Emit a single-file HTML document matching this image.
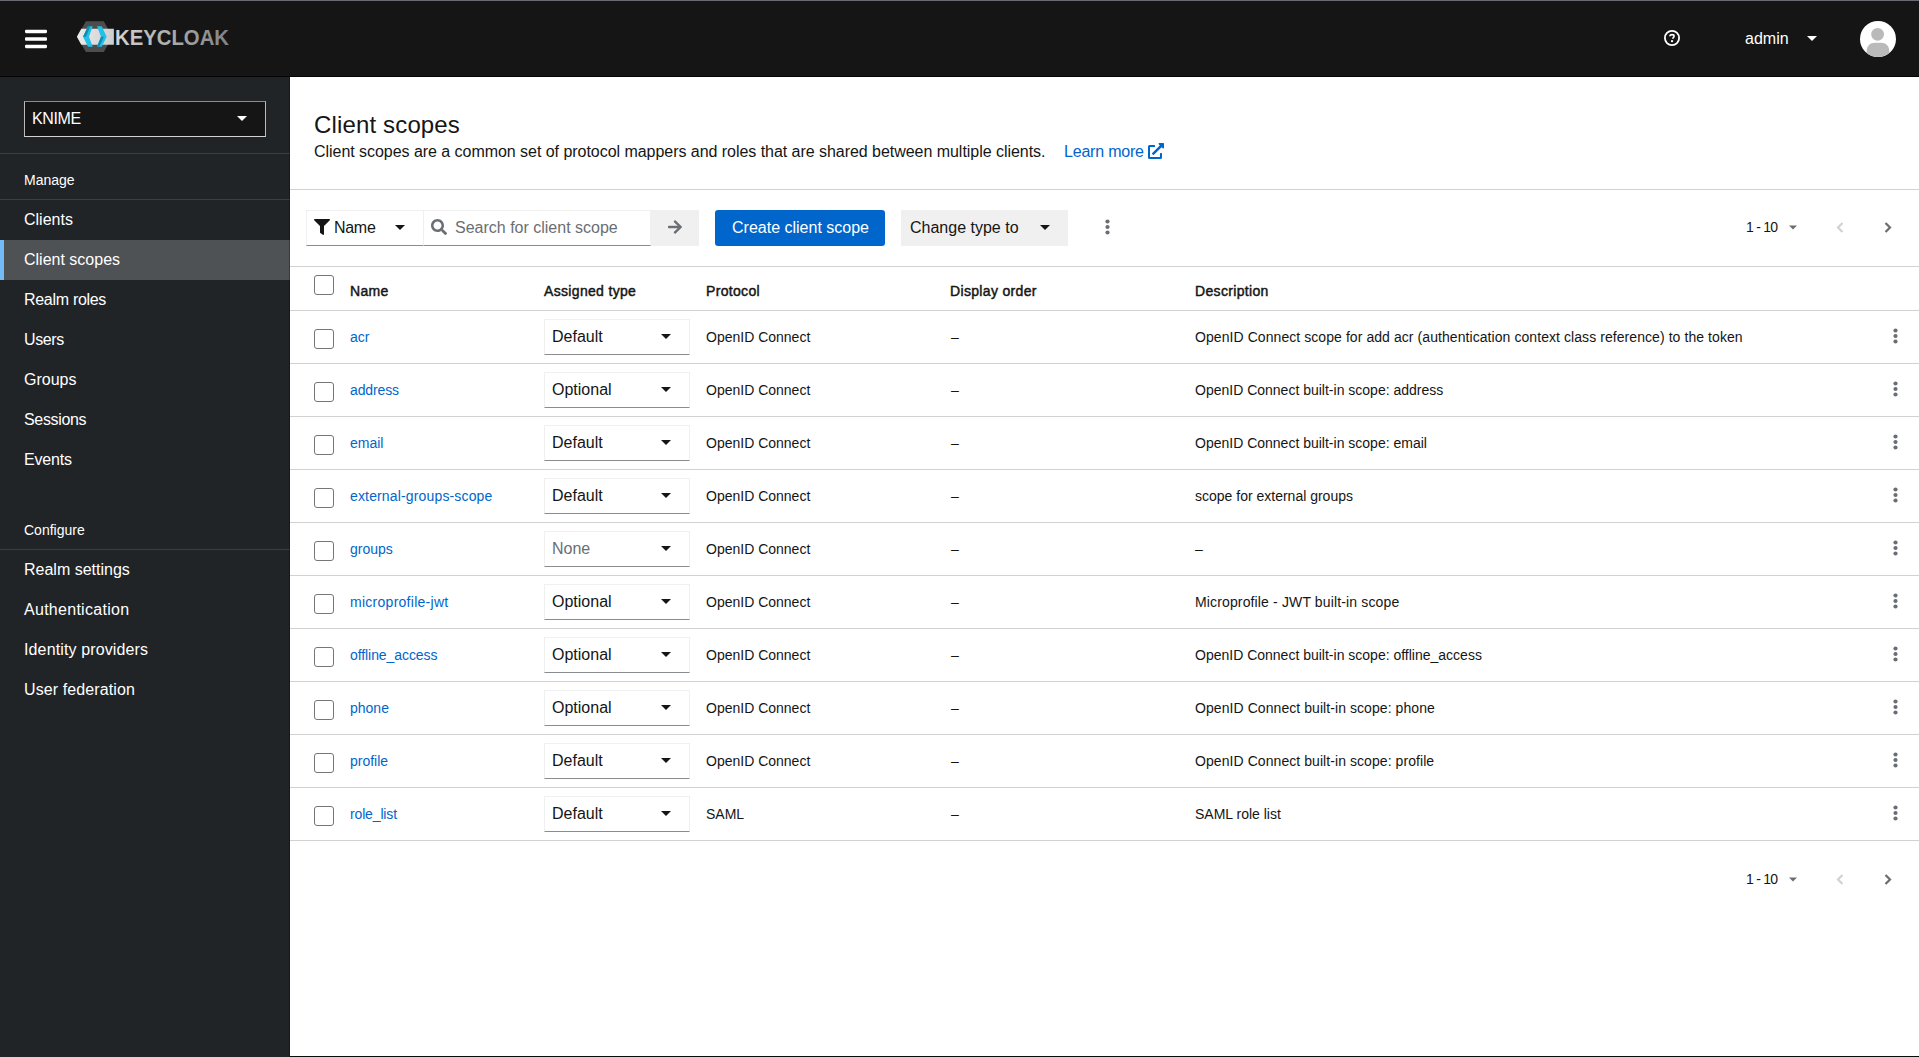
<!DOCTYPE html>
<html><head><meta charset="utf-8">
<style>
*{box-sizing:border-box;margin:0;padding:0}
html,body{width:1919px;height:1057px;overflow:hidden;background:#fff;font-family:"Liberation Sans",sans-serif;color:#151515}
.abs{position:absolute}
.t{position:absolute;white-space:nowrap;line-height:1}
svg{display:block}
</style></head><body>
<div class="abs" style="left:0px;top:0px;width:1919px;height:77px;background:#151515;"></div>
<div class="abs" style="left:0px;top:0px;width:1919px;height:1px;background:#6a6b70;"></div>
<div class="abs" style="left:0px;top:76px;width:1919px;height:1px;background:#030303;"></div>
<svg class="abs" style="left:25px;top:29px" width="22" height="20" viewBox="0 0 22 20"><rect x="0" y="0.7" width="22" height="3.5" rx="1.1" fill="#fff"/><rect x="0" y="8.2" width="22" height="3.6" rx="1.1" fill="#fff"/><rect x="0" y="15.7" width="22" height="3.5" rx="1.1" fill="#fff"/></svg>
<svg class="abs" style="left:70px;top:15px" width="170" height="45" viewBox="70 15 170 45">
<defs>
<linearGradient id="kg" x1="115" y1="0" x2="229" y2="0" gradientUnits="userSpaceOnUse">
<stop offset="0" stop-color="#d4d4d4"/><stop offset="1" stop-color="#828282"/></linearGradient>
<linearGradient id="bg1" x1="77" y1="0" x2="114" y2="0" gradientUnits="userSpaceOnUse">
<stop offset="0" stop-color="#ececec"/><stop offset="1" stop-color="#cdcdcd"/></linearGradient>
</defs>
<path d="M85.9 21.2H103.8L112.5 36.7L103.8 52H85.9L76.9 36.7Z" fill="#4d4d4d"/>
<path d="M81.3 28.8H113.9V44.8H81.3L76.9 36.7Z" fill="url(#bg1)"/>
<path d="M88 26.3H92.7L89 36.7L92.7 46.8H88L83 36.7Z" fill="#22c1ea"/>
<path d="M97 26.3H101.7L106.7 36.7L101.7 46.8H97L101 36.7Z" fill="#22c1ea"/>
<path d="M88 26.3H90.35L86 36.7H83Z" fill="#0b8db5"/>
<path d="M101 36.7H103.85L99.35 46.8H97Z" fill="#0b8db5"/>
<text x="115" y="45" font-family="Liberation Sans" font-weight="700" font-size="22.6" textLength="114" lengthAdjust="spacingAndGlyphs" fill="url(#kg)">KEYCLOAK</text>
</svg>
<svg class="abs" style="left:1664px;top:30px" width="16" height="16" viewBox="0 0 16 16"><circle cx="8" cy="8" r="7.1" fill="none" stroke="#fff" stroke-width="1.8"/><path d="M5.9 6.3C5.9 5.1 6.9 4.6 8 4.6C9.1 4.6 10.1 5.2 10.1 6.2C10.1 7.3 8.8 7.5 8.8 8.7" fill="none" stroke="#fff" stroke-width="1.6"/><rect x="7" y="10.2" width="2.1" height="1.9" fill="#fff"/></svg>
<div class="t" style="left:1745px;top:31px;font-size:16px;color:#fff;font-weight:400;">admin</div>
<svg class="abs" style="left:1807px;top:36px" width="10" height="5" viewBox="0 0 10 5"><path d="M0 0H10L5 5Z" fill="#fff"/></svg>
<svg class="abs" style="left:1860px;top:21px" width="36" height="36" viewBox="0 0 36 36"><defs><clipPath id="ac"><circle cx="18" cy="18" r="18"/></clipPath></defs><circle cx="18" cy="18" r="18" fill="#fff"/><g clip-path="url(#ac)" fill="#bababa"><circle cx="17.6" cy="13.3" r="6.4"/><path d="M6.7 36V30C6.7 25 10 21.8 15 21.8H21C26 21.8 29.2 25 29.2 30V36Z"/></g></svg>
<div class="abs" style="left:0px;top:77px;width:290px;height:980px;background:#212427;"></div>
<div class="abs" style="left:24px;top:101px;width:242px;height:36px;background:#151515;border:1px solid #b8bbbe;border-top-color:#8a8d90;border-bottom-color:#d2d2d2"></div>
<div class="t" style="left:32px;top:111px;font-size:16px;color:#fff;font-weight:400;letter-spacing:-0.4px">KNIME</div>
<svg class="abs" style="left:237px;top:116px" width="10" height="5" viewBox="0 0 10 5"><path d="M0 0H10L5 5Z" fill="#fff"/></svg>
<div class="abs" style="left:0px;top:153px;width:290px;height:1px;background:#3c3f42;"></div>
<div class="t" style="left:24px;top:173px;font-size:14px;color:#fff;font-weight:400;">Manage</div>
<div class="abs" style="left:0px;top:199px;width:290px;height:1px;background:#3c3f42;"></div>
<div class="t" style="left:24px;top:212px;font-size:16px;color:#fff;font-weight:400;letter-spacing:0px">Clients</div>
<div class="abs" style="left:0px;top:240px;width:290px;height:40px;background:#4f5255;"></div>
<div class="abs" style="left:0px;top:240px;width:4px;height:40px;background:#73bcf7;"></div>
<div class="t" style="left:24px;top:252px;font-size:16px;color:#fff;font-weight:400;letter-spacing:0px">Client scopes</div>
<div class="t" style="left:24px;top:292px;font-size:16px;color:#fff;font-weight:400;letter-spacing:-0.3px">Realm roles</div>
<div class="t" style="left:24px;top:332px;font-size:16px;color:#fff;font-weight:400;letter-spacing:-0.4px">Users</div>
<div class="t" style="left:24px;top:372px;font-size:16px;color:#fff;font-weight:400;letter-spacing:0px">Groups</div>
<div class="t" style="left:24px;top:412px;font-size:16px;color:#fff;font-weight:400;letter-spacing:-0.33px">Sessions</div>
<div class="t" style="left:24px;top:452px;font-size:16px;color:#fff;font-weight:400;letter-spacing:-0.2px">Events</div>
<div class="t" style="left:24px;top:523px;font-size:14px;color:#fff;font-weight:400;">Configure</div>
<div class="abs" style="left:0px;top:549px;width:290px;height:1px;background:#3c3f42;"></div>
<div class="t" style="left:24px;top:562px;font-size:16px;color:#fff;font-weight:400;letter-spacing:0px">Realm settings</div>
<div class="t" style="left:24px;top:602px;font-size:16px;color:#fff;font-weight:400;letter-spacing:0.28px">Authentication</div>
<div class="t" style="left:24px;top:642px;font-size:16px;color:#fff;font-weight:400;letter-spacing:0.13px">Identity providers</div>
<div class="t" style="left:24px;top:682px;font-size:16px;color:#fff;font-weight:400;letter-spacing:0.1px">User federation</div>
<div class="abs" style="left:289px;top:77px;width:1px;height:980px;background:rgba(0,0,0,0.3);"></div>
<div class="t" style="left:314px;top:113px;font-size:24px;color:#151515;font-weight:400;letter-spacing:0.15px">Client scopes</div>
<div class="t" style="left:314px;top:144px;font-size:16px;color:#151515;font-weight:400;letter-spacing:-0.04px">Client scopes are a common set of protocol mappers and roles that are shared between multiple clients.</div>
<div class="t" style="left:1064px;top:144px;font-size:16px;color:#0066cc;font-weight:400;letter-spacing:-0.2px">Learn more</div>
<svg class="abs" style="left:1148px;top:143px" width="16" height="16" viewBox="0 0 512 512"><path fill="#0066cc" d="M432 320h-32a16 16 0 0 0-16 16v112H64V128h144a16 16 0 0 0 16-16V80a16 16 0 0 0-16-16H48A48 48 0 0 0 0 112v352a48 48 0 0 0 48 48h352a48 48 0 0 0 48-48V336a16 16 0 0 0-16-16zM488 0H360c-21.37 0-32.05 25.91-17 41l35.73 35.73L135 320.37a24 24 0 0 0 0 34L157.67 377a24 24 0 0 0 34 0L435.28 133.32 471 169c15 15 41 4.5 41-17V24a24 24 0 0 0-24-24z"/></svg>
<div class="abs" style="left:290px;top:189px;width:1629px;height:1px;background:#d2d2d2;"></div>
<div class="abs" style="left:306px;top:210px;width:117px;height:36px;border:1px solid #f0f0f0;border-bottom-color:#8a8d90;border-right:none"></div>
<svg class="abs" style="left:314px;top:219px" width="16" height="16" viewBox="0 0 512 512"><path fill="#151515" d="M487.976 0H24.028C2.71 0-8.047 25.866 7.058 40.971L192 225.941V432c0 7.831 3.821 15.17 10.237 19.662l80 55.98C298.02 518.69 320 507.493 320 487.98V225.941l184.947-184.97C520.021 25.896 509.338 0 487.976 0z"/></svg>
<div class="t" style="left:334px;top:220px;font-size:16px;color:#151515;font-weight:400;letter-spacing:-0.3px">Name</div>
<svg class="abs" style="left:395px;top:225px" width="10" height="5" viewBox="0 0 10 5"><path d="M0 0H10L5 5Z" fill="#151515"/></svg>
<div class="abs" style="left:423px;top:210px;width:228px;height:36px;border:1px solid #f0f0f0;border-bottom-color:#8a8d90"></div>
<svg class="abs" style="left:431px;top:219px" width="16" height="16" viewBox="0 0 512 512"><path fill="#6a6e73" d="M505 442.7L405.3 343c-4.5-4.5-10.6-7-17-7H372c27.6-35.3 44-79.7 44-128C416 93.1 322.9 0 208 0S0 93.1 0 208s93.1 208 208 208c48.3 0 92.7-16.4 128-44v16.3c0 6.4 2.5 12.5 7 17l99.7 99.7c9.4 9.4 24.6 9.4 33.9 0l28.3-28.3c9.4-9.4 9.4-24.6.1-34zM208 336c-70.7 0-128-57.2-128-128 0-70.7 57.2-128 128-128 70.7 0 128 57.2 128 128 0 70.7-57.2 128-128 128z"/></svg>
<div class="t" style="left:455px;top:220px;font-size:16px;color:#6a6e73;font-weight:400;">Search for client scope</div>
<div class="abs" style="left:651px;top:210px;width:48px;height:36px;background:#f0f0f0;"></div>
<svg class="abs" style="left:667px;top:219px" width="16" height="16" viewBox="0 0 448 512"><path fill="#6a6e73" d="M190.5 66.9l22.2-22.2c9.4-9.4 24.6-9.4 33.9 0L441 239c9.4 9.4 9.4 24.6 0 33.9L246.6 467.3c-9.4 9.4-24.6 9.4-33.9 0l-22.2-22.2c-9.5-9.5-9.3-25 .4-34.3L311.4 296H24c-13.3 0-24-10.7-24-24v-32c0-13.3 10.7-24 24-24h287.4L190.9 101.2c-9.8-9.3-10-24.8-.4-34.3z"/></svg>
<div class="abs" style="left:715px;top:210px;width:170px;height:36px;background:#0066cc;border-radius:3px;"></div>
<div class="t" style="left:732px;top:220px;font-size:16px;color:#fff;font-weight:400;">Create client scope</div>
<div class="abs" style="left:901px;top:210px;width:167px;height:36px;background:#f0f0f0;"></div>
<div class="t" style="left:910px;top:220px;font-size:16px;color:#151515;font-weight:400;">Change type to</div>
<svg class="abs" style="left:1040px;top:225px" width="10" height="5" viewBox="0 0 10 5"><path d="M0 0H10L5 5Z" fill="#151515"/></svg>
<svg class="abs" style="left:1105.1px;top:219px" width="5" height="16" viewBox="0 0 5 16"><circle cx="2.5" cy="2.5" r="2.1" fill="#6a6e73"/><circle cx="2.5" cy="8" r="2.1" fill="#6a6e73"/><circle cx="2.5" cy="13.5" r="2.1" fill="#6a6e73"/></svg>
<div class="t" style="left:1746px;top:220px;font-size:14px;color:#151515;font-weight:400;letter-spacing:-0.75px">1 - 10</div>
<svg class="abs" style="left:1789px;top:225px" width="8" height="5" viewBox="0 0 10 5"><path d="M0 0H10L5 5Z" fill="#6a6e73"/></svg>
<svg class="abs" style="left:1836px;top:221.5px" width="8" height="11" viewBox="0 0 8 11"><path d="M6.5 1L2 5.5L6.5 10" fill="none" stroke="#d2d2d2" stroke-width="2.2"/></svg>
<svg class="abs" style="left:1884px;top:221.5px" width="8" height="11" viewBox="0 0 8 11"><path d="M1.5 1L6 5.5L1.5 10" fill="none" stroke="#6a6e73" stroke-width="2.2"/></svg>
<div class="abs" style="left:290px;top:266px;width:1629px;height:1px;background:#d2d2d2;"></div>
<div class="abs" style="left:314px;top:275px;width:20px;height:20px;border:1px solid #767676;border-radius:3px;background:#fff"></div>
<div class="t" style="left:350px;top:284px;font-size:14px;color:#151515;font-weight:400;letter-spacing:0.33px;-webkit-text-stroke:0.45px #151515">Name</div>
<div class="t" style="left:544px;top:284px;font-size:14px;color:#151515;font-weight:400;letter-spacing:0.33px;-webkit-text-stroke:0.45px #151515">Assigned type</div>
<div class="t" style="left:706px;top:284px;font-size:14px;color:#151515;font-weight:400;letter-spacing:0.33px;-webkit-text-stroke:0.45px #151515">Protocol</div>
<div class="t" style="left:950px;top:284px;font-size:14px;color:#151515;font-weight:400;letter-spacing:0.33px;-webkit-text-stroke:0.45px #151515">Display order</div>
<div class="t" style="left:1195px;top:284px;font-size:14px;color:#151515;font-weight:400;letter-spacing:0.33px;-webkit-text-stroke:0.45px #151515">Description</div>
<div class="abs" style="left:290px;top:310px;width:1629px;height:1px;background:#d2d2d2;"></div>
<div class="abs" style="left:314px;top:329px;width:20px;height:20px;border:1px solid #767676;border-radius:3px;background:#fff"></div>
<div class="t" style="left:350px;top:330px;font-size:14px;color:#0066cc;font-weight:400;letter-spacing:0.00px">acr</div>
<div class="abs" style="left:544px;top:319px;width:146px;height:36px;border:1px solid #f0f0f0;border-bottom-color:#8a8d90"></div>
<div class="t" style="left:552px;top:329px;font-size:16px;color:#151515;font-weight:400;">Default</div>
<svg class="abs" style="left:661px;top:334px" width="10" height="5" viewBox="0 0 10 5"><path d="M0 0H10L5 5Z" fill="#151515"/></svg>
<div class="t" style="left:706px;top:330px;font-size:14px;color:#151515;font-weight:400;">OpenID Connect</div>
<div class="t" style="left:951px;top:330px;font-size:14px;color:#151515;font-weight:400;">&ndash;</div>
<div class="t" style="left:1195px;top:330px;font-size:14px;color:#151515;font-weight:400;letter-spacing:0.07px">OpenID Connect scope for add acr (authentication context class reference) to the token</div>
<svg class="abs" style="left:1893.0px;top:328px" width="5" height="16" viewBox="0 0 5 16"><circle cx="2.5" cy="2.5" r="2.1" fill="#6a6e73"/><circle cx="2.5" cy="8" r="2.1" fill="#6a6e73"/><circle cx="2.5" cy="13.5" r="2.1" fill="#6a6e73"/></svg>
<div class="abs" style="left:290px;top:363px;width:1629px;height:1px;background:#d2d2d2;"></div>
<div class="abs" style="left:314px;top:382px;width:20px;height:20px;border:1px solid #767676;border-radius:3px;background:#fff"></div>
<div class="t" style="left:350px;top:383px;font-size:14px;color:#0066cc;font-weight:400;letter-spacing:-0.12px">address</div>
<div class="abs" style="left:544px;top:372px;width:146px;height:36px;border:1px solid #f0f0f0;border-bottom-color:#8a8d90"></div>
<div class="t" style="left:552px;top:382px;font-size:16px;color:#151515;font-weight:400;">Optional</div>
<svg class="abs" style="left:661px;top:387px" width="10" height="5" viewBox="0 0 10 5"><path d="M0 0H10L5 5Z" fill="#151515"/></svg>
<div class="t" style="left:706px;top:383px;font-size:14px;color:#151515;font-weight:400;">OpenID Connect</div>
<div class="t" style="left:951px;top:383px;font-size:14px;color:#151515;font-weight:400;">&ndash;</div>
<div class="t" style="left:1195px;top:383px;font-size:14px;color:#151515;font-weight:400;letter-spacing:0.00px">OpenID Connect built-in scope: address</div>
<svg class="abs" style="left:1893.0px;top:381px" width="5" height="16" viewBox="0 0 5 16"><circle cx="2.5" cy="2.5" r="2.1" fill="#6a6e73"/><circle cx="2.5" cy="8" r="2.1" fill="#6a6e73"/><circle cx="2.5" cy="13.5" r="2.1" fill="#6a6e73"/></svg>
<div class="abs" style="left:290px;top:416px;width:1629px;height:1px;background:#d2d2d2;"></div>
<div class="abs" style="left:314px;top:435px;width:20px;height:20px;border:1px solid #767676;border-radius:3px;background:#fff"></div>
<div class="t" style="left:350px;top:436px;font-size:14px;color:#0066cc;font-weight:400;letter-spacing:0.00px">email</div>
<div class="abs" style="left:544px;top:425px;width:146px;height:36px;border:1px solid #f0f0f0;border-bottom-color:#8a8d90"></div>
<div class="t" style="left:552px;top:435px;font-size:16px;color:#151515;font-weight:400;">Default</div>
<svg class="abs" style="left:661px;top:440px" width="10" height="5" viewBox="0 0 10 5"><path d="M0 0H10L5 5Z" fill="#151515"/></svg>
<div class="t" style="left:706px;top:436px;font-size:14px;color:#151515;font-weight:400;">OpenID Connect</div>
<div class="t" style="left:951px;top:436px;font-size:14px;color:#151515;font-weight:400;">&ndash;</div>
<div class="t" style="left:1195px;top:436px;font-size:14px;color:#151515;font-weight:400;letter-spacing:0.00px">OpenID Connect built-in scope: email</div>
<svg class="abs" style="left:1893.0px;top:434px" width="5" height="16" viewBox="0 0 5 16"><circle cx="2.5" cy="2.5" r="2.1" fill="#6a6e73"/><circle cx="2.5" cy="8" r="2.1" fill="#6a6e73"/><circle cx="2.5" cy="13.5" r="2.1" fill="#6a6e73"/></svg>
<div class="abs" style="left:290px;top:469px;width:1629px;height:1px;background:#d2d2d2;"></div>
<div class="abs" style="left:314px;top:488px;width:20px;height:20px;border:1px solid #767676;border-radius:3px;background:#fff"></div>
<div class="t" style="left:350px;top:489px;font-size:14px;color:#0066cc;font-weight:400;letter-spacing:0.15px">external-groups-scope</div>
<div class="abs" style="left:544px;top:478px;width:146px;height:36px;border:1px solid #f0f0f0;border-bottom-color:#8a8d90"></div>
<div class="t" style="left:552px;top:488px;font-size:16px;color:#151515;font-weight:400;">Default</div>
<svg class="abs" style="left:661px;top:493px" width="10" height="5" viewBox="0 0 10 5"><path d="M0 0H10L5 5Z" fill="#151515"/></svg>
<div class="t" style="left:706px;top:489px;font-size:14px;color:#151515;font-weight:400;">OpenID Connect</div>
<div class="t" style="left:951px;top:489px;font-size:14px;color:#151515;font-weight:400;">&ndash;</div>
<div class="t" style="left:1195px;top:489px;font-size:14px;color:#151515;font-weight:400;letter-spacing:0.00px">scope for external groups</div>
<svg class="abs" style="left:1893.0px;top:487px" width="5" height="16" viewBox="0 0 5 16"><circle cx="2.5" cy="2.5" r="2.1" fill="#6a6e73"/><circle cx="2.5" cy="8" r="2.1" fill="#6a6e73"/><circle cx="2.5" cy="13.5" r="2.1" fill="#6a6e73"/></svg>
<div class="abs" style="left:290px;top:522px;width:1629px;height:1px;background:#d2d2d2;"></div>
<div class="abs" style="left:314px;top:541px;width:20px;height:20px;border:1px solid #767676;border-radius:3px;background:#fff"></div>
<div class="t" style="left:350px;top:542px;font-size:14px;color:#0066cc;font-weight:400;letter-spacing:0.00px">groups</div>
<div class="abs" style="left:544px;top:531px;width:146px;height:36px;border:1px solid #f0f0f0;border-bottom-color:#8a8d90"></div>
<div class="t" style="left:552px;top:541px;font-size:16px;color:#6a6e73;font-weight:400;">None</div>
<svg class="abs" style="left:661px;top:546px" width="10" height="5" viewBox="0 0 10 5"><path d="M0 0H10L5 5Z" fill="#151515"/></svg>
<div class="t" style="left:706px;top:542px;font-size:14px;color:#151515;font-weight:400;">OpenID Connect</div>
<div class="t" style="left:951px;top:542px;font-size:14px;color:#151515;font-weight:400;">&ndash;</div>
<div class="t" style="left:1195px;top:542px;font-size:14px;color:#151515;font-weight:400;letter-spacing:0.00px">&ndash;</div>
<svg class="abs" style="left:1893.0px;top:540px" width="5" height="16" viewBox="0 0 5 16"><circle cx="2.5" cy="2.5" r="2.1" fill="#6a6e73"/><circle cx="2.5" cy="8" r="2.1" fill="#6a6e73"/><circle cx="2.5" cy="13.5" r="2.1" fill="#6a6e73"/></svg>
<div class="abs" style="left:290px;top:575px;width:1629px;height:1px;background:#d2d2d2;"></div>
<div class="abs" style="left:314px;top:594px;width:20px;height:20px;border:1px solid #767676;border-radius:3px;background:#fff"></div>
<div class="t" style="left:350px;top:595px;font-size:14px;color:#0066cc;font-weight:400;letter-spacing:0.27px">microprofile-jwt</div>
<div class="abs" style="left:544px;top:584px;width:146px;height:36px;border:1px solid #f0f0f0;border-bottom-color:#8a8d90"></div>
<div class="t" style="left:552px;top:594px;font-size:16px;color:#151515;font-weight:400;">Optional</div>
<svg class="abs" style="left:661px;top:599px" width="10" height="5" viewBox="0 0 10 5"><path d="M0 0H10L5 5Z" fill="#151515"/></svg>
<div class="t" style="left:706px;top:595px;font-size:14px;color:#151515;font-weight:400;">OpenID Connect</div>
<div class="t" style="left:951px;top:595px;font-size:14px;color:#151515;font-weight:400;">&ndash;</div>
<div class="t" style="left:1195px;top:595px;font-size:14px;color:#151515;font-weight:400;letter-spacing:0.14px">Microprofile - JWT built-in scope</div>
<svg class="abs" style="left:1893.0px;top:593px" width="5" height="16" viewBox="0 0 5 16"><circle cx="2.5" cy="2.5" r="2.1" fill="#6a6e73"/><circle cx="2.5" cy="8" r="2.1" fill="#6a6e73"/><circle cx="2.5" cy="13.5" r="2.1" fill="#6a6e73"/></svg>
<div class="abs" style="left:290px;top:628px;width:1629px;height:1px;background:#d2d2d2;"></div>
<div class="abs" style="left:314px;top:647px;width:20px;height:20px;border:1px solid #767676;border-radius:3px;background:#fff"></div>
<div class="t" style="left:350px;top:648px;font-size:14px;color:#0066cc;font-weight:400;letter-spacing:-0.08px">offline_access</div>
<div class="abs" style="left:544px;top:637px;width:146px;height:36px;border:1px solid #f0f0f0;border-bottom-color:#8a8d90"></div>
<div class="t" style="left:552px;top:647px;font-size:16px;color:#151515;font-weight:400;">Optional</div>
<svg class="abs" style="left:661px;top:652px" width="10" height="5" viewBox="0 0 10 5"><path d="M0 0H10L5 5Z" fill="#151515"/></svg>
<div class="t" style="left:706px;top:648px;font-size:14px;color:#151515;font-weight:400;">OpenID Connect</div>
<div class="t" style="left:951px;top:648px;font-size:14px;color:#151515;font-weight:400;">&ndash;</div>
<div class="t" style="left:1195px;top:648px;font-size:14px;color:#151515;font-weight:400;letter-spacing:0.00px">OpenID Connect built-in scope: offline_access</div>
<svg class="abs" style="left:1893.0px;top:646px" width="5" height="16" viewBox="0 0 5 16"><circle cx="2.5" cy="2.5" r="2.1" fill="#6a6e73"/><circle cx="2.5" cy="8" r="2.1" fill="#6a6e73"/><circle cx="2.5" cy="13.5" r="2.1" fill="#6a6e73"/></svg>
<div class="abs" style="left:290px;top:681px;width:1629px;height:1px;background:#d2d2d2;"></div>
<div class="abs" style="left:314px;top:700px;width:20px;height:20px;border:1px solid #767676;border-radius:3px;background:#fff"></div>
<div class="t" style="left:350px;top:701px;font-size:14px;color:#0066cc;font-weight:400;letter-spacing:0.00px">phone</div>
<div class="abs" style="left:544px;top:690px;width:146px;height:36px;border:1px solid #f0f0f0;border-bottom-color:#8a8d90"></div>
<div class="t" style="left:552px;top:700px;font-size:16px;color:#151515;font-weight:400;">Optional</div>
<svg class="abs" style="left:661px;top:705px" width="10" height="5" viewBox="0 0 10 5"><path d="M0 0H10L5 5Z" fill="#151515"/></svg>
<div class="t" style="left:706px;top:701px;font-size:14px;color:#151515;font-weight:400;">OpenID Connect</div>
<div class="t" style="left:951px;top:701px;font-size:14px;color:#151515;font-weight:400;">&ndash;</div>
<div class="t" style="left:1195px;top:701px;font-size:14px;color:#151515;font-weight:400;letter-spacing:0.07px">OpenID Connect built-in scope: phone</div>
<svg class="abs" style="left:1893.0px;top:699px" width="5" height="16" viewBox="0 0 5 16"><circle cx="2.5" cy="2.5" r="2.1" fill="#6a6e73"/><circle cx="2.5" cy="8" r="2.1" fill="#6a6e73"/><circle cx="2.5" cy="13.5" r="2.1" fill="#6a6e73"/></svg>
<div class="abs" style="left:290px;top:734px;width:1629px;height:1px;background:#d2d2d2;"></div>
<div class="abs" style="left:314px;top:753px;width:20px;height:20px;border:1px solid #767676;border-radius:3px;background:#fff"></div>
<div class="t" style="left:350px;top:754px;font-size:14px;color:#0066cc;font-weight:400;letter-spacing:0.00px">profile</div>
<div class="abs" style="left:544px;top:743px;width:146px;height:36px;border:1px solid #f0f0f0;border-bottom-color:#8a8d90"></div>
<div class="t" style="left:552px;top:753px;font-size:16px;color:#151515;font-weight:400;">Default</div>
<svg class="abs" style="left:661px;top:758px" width="10" height="5" viewBox="0 0 10 5"><path d="M0 0H10L5 5Z" fill="#151515"/></svg>
<div class="t" style="left:706px;top:754px;font-size:14px;color:#151515;font-weight:400;">OpenID Connect</div>
<div class="t" style="left:951px;top:754px;font-size:14px;color:#151515;font-weight:400;">&ndash;</div>
<div class="t" style="left:1195px;top:754px;font-size:14px;color:#151515;font-weight:400;letter-spacing:0.07px">OpenID Connect built-in scope: profile</div>
<svg class="abs" style="left:1893.0px;top:752px" width="5" height="16" viewBox="0 0 5 16"><circle cx="2.5" cy="2.5" r="2.1" fill="#6a6e73"/><circle cx="2.5" cy="8" r="2.1" fill="#6a6e73"/><circle cx="2.5" cy="13.5" r="2.1" fill="#6a6e73"/></svg>
<div class="abs" style="left:290px;top:787px;width:1629px;height:1px;background:#d2d2d2;"></div>
<div class="abs" style="left:314px;top:806px;width:20px;height:20px;border:1px solid #767676;border-radius:3px;background:#fff"></div>
<div class="t" style="left:350px;top:807px;font-size:14px;color:#0066cc;font-weight:400;letter-spacing:-0.15px">role_list</div>
<div class="abs" style="left:544px;top:796px;width:146px;height:36px;border:1px solid #f0f0f0;border-bottom-color:#8a8d90"></div>
<div class="t" style="left:552px;top:806px;font-size:16px;color:#151515;font-weight:400;">Default</div>
<svg class="abs" style="left:661px;top:811px" width="10" height="5" viewBox="0 0 10 5"><path d="M0 0H10L5 5Z" fill="#151515"/></svg>
<div class="t" style="left:706px;top:807px;font-size:14px;color:#151515;font-weight:400;">SAML</div>
<div class="t" style="left:951px;top:807px;font-size:14px;color:#151515;font-weight:400;">&ndash;</div>
<div class="t" style="left:1195px;top:807px;font-size:14px;color:#151515;font-weight:400;letter-spacing:0.00px">SAML role list</div>
<svg class="abs" style="left:1893.0px;top:805px" width="5" height="16" viewBox="0 0 5 16"><circle cx="2.5" cy="2.5" r="2.1" fill="#6a6e73"/><circle cx="2.5" cy="8" r="2.1" fill="#6a6e73"/><circle cx="2.5" cy="13.5" r="2.1" fill="#6a6e73"/></svg>
<div class="abs" style="left:290px;top:840px;width:1629px;height:1px;background:#d2d2d2;"></div>
<div class="t" style="left:1746px;top:872px;font-size:14px;color:#151515;font-weight:400;letter-spacing:-0.75px">1 - 10</div>
<svg class="abs" style="left:1789px;top:877px" width="8" height="5" viewBox="0 0 10 5"><path d="M0 0H10L5 5Z" fill="#6a6e73"/></svg>
<svg class="abs" style="left:1836px;top:873.5px" width="8" height="11" viewBox="0 0 8 11"><path d="M6.5 1L2 5.5L6.5 10" fill="none" stroke="#d2d2d2" stroke-width="2.2"/></svg>
<svg class="abs" style="left:1884px;top:873.5px" width="8" height="11" viewBox="0 0 8 11"><path d="M1.5 1L6 5.5L1.5 10" fill="none" stroke="#6a6e73" stroke-width="2.2"/></svg>
<div class="abs" style="left:290px;top:1056px;width:1629px;height:1px;background:#0a0a0a;"></div>
</body></html>
